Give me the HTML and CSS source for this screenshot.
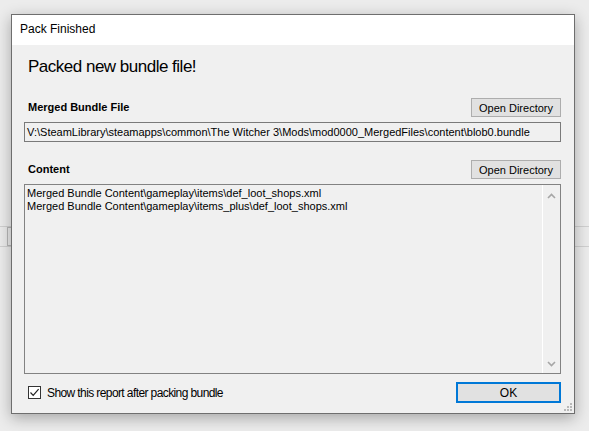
FILE: index.html
```html
<!DOCTYPE html>
<html>
<head>
<meta charset="utf-8">
<link rel="stylesheet" href="styles.css">
</head>
<body>
<div class="desktop">
  <div class="behind"><div class="behind-btn"></div></div>
  <div class="dialog">
    <div class="titlebar">Pack Finished</div>
    <div class="body">
      <div class="heading">Packed new bundle file!</div>
      <div class="row row-first">
        <span class="label">Merged Bundle File</span>
        <button class="btn">Open Directory</button>
      </div>
      <div class="textbox">V:\SteamLibrary\steamapps\common\The Witcher 3\Mods\mod0000_MergedFiles\content\blob0.bundle</div>
      <div class="row row-second">
        <span class="label">Content</span>
        <button class="btn">Open Directory</button>
      </div>
      <div class="textarea">
        <div class="lines">
          <div>Merged Bundle Content\gameplay\items\def_loot_shops.xml</div>
          <div>Merged Bundle Content\gameplay\items_plus\def_loot_shops.xml</div>
        </div>
        <div class="scrollbar">
          <svg class="chev" width="9" height="6" viewBox="0 0 9 6"><path d="M1 5 L4.5 1.5 L8 5" fill="none" stroke="#a6a6a6" stroke-width="1.6"/></svg>
          <svg class="chev" width="9" height="6" viewBox="0 0 9 6"><path d="M1 1 L4.5 4.5 L8 1" fill="none" stroke="#a6a6a6" stroke-width="1.6"/></svg>
        </div>
      </div>
      <div class="footer">
        <label class="check">
          <span class="box"><svg width="11" height="11" viewBox="0 0 11 11"><path d="M1.5 5.5 L4.2 8.3 L9.6 2.2" fill="none" stroke="#222" stroke-width="1.2"/></svg></span>
          <span>Show this report after packing bundle</span>
        </label>
        <button class="btn ok">OK</button>
      </div>
    </div>
    <svg class="grip" width="8" height="8" viewBox="0 0 8 8">
      <rect x="6" y="0" width="2" height="2" fill="#b8b8b8"/>
      <rect x="3" y="3" width="2" height="2" fill="#b8b8b8"/>
      <rect x="6" y="3" width="2" height="2" fill="#b8b8b8"/>
      <rect x="0" y="6" width="2" height="2" fill="#b8b8b8"/>
      <rect x="3" y="6" width="2" height="2" fill="#b8b8b8"/>
      <rect x="6" y="6" width="2" height="2" fill="#b8b8b8"/>
    </svg>
  </div>
</div>
</body>
</html>
```
FILE: styles.css
```css
html, body {
  margin: 0;
  padding: 0;
  background: #ececec;
  font-family: "Liberation Sans", Arial, sans-serif;
  color: #000;
}
.desktop {
  position: relative;
  width: 589px;
  height: 431px;
  padding: 14px 0 0 11px;
  box-sizing: border-box;
  overflow: hidden;
}
.behind {
  position: absolute;
  left: 0;
  top: 226px;
  width: 589px;
  height: 19px;
  border-top: 1px solid #d0d0d0;
  border-bottom: 1px solid #d0d0d0;
  background: #ebebeb;
}
.behind-btn {
  position: absolute;
  left: 7px;
  top: 0;
  width: 10px;
  height: 17px;
  border: 1px solid #b8b8b8;
}
.dialog {
  position: relative;
  width: 564px;
  height: 400px;
  box-sizing: border-box;
  border: 1px solid #6e6e6e;
  background: #f0f0f0;
  box-shadow: 0 4px 14px rgba(0, 0, 0, 0.3);
  display: flex;
  flex-direction: column;
}
.titlebar {
  height: 30px;
  line-height: 28px;
  background: #fff;
  font-size: 12px;
  padding-left: 8px;
}
.body {
  flex: 1;
  padding: 12px 13px 0 12px;
  display: flex;
  flex-direction: column;
}
.heading {
  font-size: 17px;
  line-height: 20px;
  padding-left: 4px;
  letter-spacing: -0.5px;
}
.row {
  display: flex;
  align-items: center;
  justify-content: space-between;
  height: 19px;
}
.row-first { margin-top: 21px; }
.row-second { margin-top: 18px; }
.label {
  font-size: 11px;
  font-weight: bold;
  line-height: 19px;
  padding-left: 4px;
}
.btn {
  width: 90px;
  height: 19px;
  box-sizing: border-box;
  border: 1px solid #adadad;
  background: #e1e1e1;
  font-family: "Liberation Sans", Arial, sans-serif;
  font-size: 11px;
  color: #000;
  padding: 0;
  margin: 0;
}
.textbox {
  margin-top: 5px;
  height: 20px;
  box-sizing: border-box;
  border: 1px solid #7a7a7a;
  font-size: 11px;
  line-height: 18px;
  padding-left: 2px;
  white-space: nowrap;
  overflow: hidden;
}
.textarea {
  margin-top: 5px;
  height: 190px;
  box-sizing: border-box;
  border: 1px solid #828282;
  display: flex;
}
.lines {
  flex: 1;
  padding: 2px 0 0 2px;
  font-size: 11px;
  line-height: 13px;
}
.scrollbar {
  width: 17px;
  border-left: 1px solid #ffffff;
  display: flex;
  flex-direction: column;
  justify-content: space-between;
  align-items: center;
  padding: 8px 0 6px 0;
}
.chev { display: block; }
.footer {
  margin-top: 8px;
  height: 21px;
  display: flex;
  align-items: center;
  justify-content: space-between;
}
.check {
  display: flex;
  align-items: center;
  gap: 6px;
  padding-left: 4px;
  font-size: 12px;
  letter-spacing: -0.6px;
}
.box {
  width: 13px;
  height: 13px;
  box-sizing: border-box;
  border: 1px solid #333;
  background: #fff;
  display: flex;
  align-items: center;
  justify-content: center;
}
.box svg { display: block; }
.ok {
  width: 105px;
  height: 21px;
  border: 2px solid #0078d7;
  font-size: 12px;
}
.grip {
  position: absolute;
  right: 2px;
  bottom: 2px;
}
```
